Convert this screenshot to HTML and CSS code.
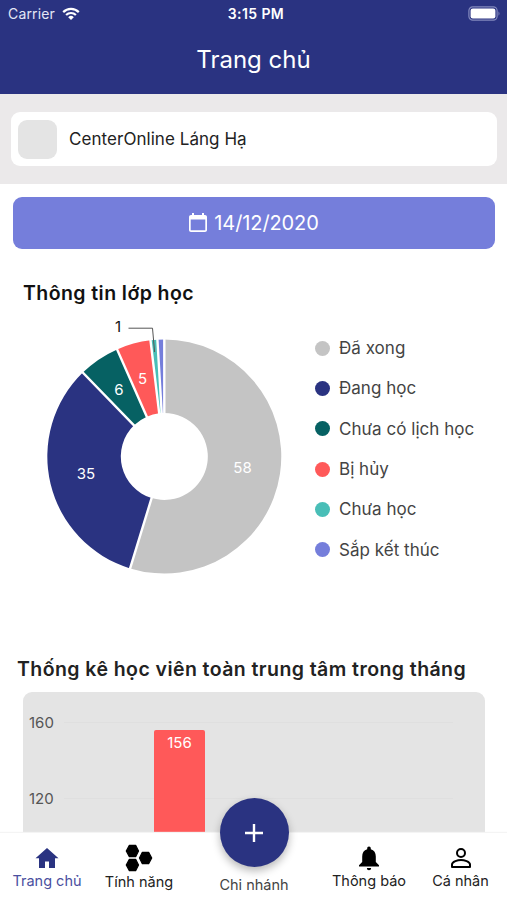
FILE: index.html
```html
<!DOCTYPE html>
<html lang="vi">
<head>
<meta charset="utf-8">
<title>Trang chủ</title>
<link rel="stylesheet" href="styles.css">
</head>
<body>
<div class="app">
  <header class="header">
    <div class="status">
      <div class="carrier"><span>Carrier</span>
        <svg width="18" height="14" viewBox="0 0 18 14" fill="none" stroke="#fff" stroke-width="2.2"><path d="M1.2 5.1a11 11 0 0 1 15.6 0M4.1 8a7 7 0 0 1 9.8 0"/><path d="M9 13 6.2 10.2a4 4 0 0 1 5.6 0Z" fill="#fff" stroke="none"/></svg>
      </div>
      <div class="clock">3:15 PM</div>
      <svg class="battery" width="33" height="15" viewBox="0 0 33 15"><rect x=".9" y=".9" width="28.2" height="13.2" rx="3.8" fill="none" stroke="#8389bd" stroke-width="1.2"/><rect x="2.6" y="2.6" width="24.8" height="9.8" rx="2.2" fill="#fff"/><path d="M30.5 5.2q2 2.3 0 4.6z" fill="#8389bd"/></svg>
    </div>
    <h1 class="page-title">Trang chủ</h1>
  </header>

  <section class="center-band">
    <div class="center-card"><div class="avatar"></div><span>CenterOnline Láng Hạ</span></div>
  </section>

  <main class="content">
    <button class="date-button">
      <svg width="18" height="20" viewBox="0 0 18 20"><path fill="#fff" fill-rule="evenodd" d="M16 2h-1V0h-2v2H5V0H3v2H2C.9 2 0 2.900 0 4v13c0 1.100.9 2 2 2h14c1.100 0 2-.9 2-2V4c0-1.100-.9-2-2-2Zm.3 15.300H1.700V6.500h14.600Z"/></svg>
      <span>14/12/2020</span>
    </button>

    <h2 class="class-title">Thông tin lớp học</h2>
    <div class="class-info">
      <svg class="donut" width="260" height="270" viewBox="30 312 260 270">
        <path fill="#c4c4c4" d="M164.300 339.500A117 117 0 1 1 130.100 568.400L151.600 498.100A43.500 43.500 0 1 0 164.300 413Z"/>
        <path fill="#2a3381" d="M130.100 568.400A117 117 0 0 1 82.800 372.600L134 425.300A43.500 43.500 0 0 0 151.600 498.100Z"/>
        <path fill="#066163" d="M82.800 372.600A117 117 0 0 1 117.100 349.400L146.800 416.700A43.500 43.500 0 0 0 134 425.300Z"/>
        <path fill="#ff5959" d="M117.100 349.400A117 117 0 0 1 150.500 340.300L159.200 413.300A43.500 43.500 0 0 0 146.800 416.700Z"/>
        <path fill="#49beb7" d="M150.500 340.300A117 117 0 0 1 157.400 339.700L161.700 413.100A43.500 43.500 0 0 0 159.200 413.300Z"/>
        <path fill="#757edb" d="M157.400 339.700A117 117 0 0 1 164.300 339.500L164.300 413A43.500 43.500 0 0 0 161.700 413.100Z"/>
        <path stroke="#fff" stroke-width="2.400" stroke-linecap="square" fill="none" d="M164.300 339.500V413M130.100 568.400L151.600 498.100M82.800 372.600L134 425.300M117.100 349.400L146.800 416.700M150.500 340.300L159.200 413.300M157.400 339.700L161.700 413.100"/>
        <path d="M128.500 328.200H152.500L154.600 352" fill="none" stroke="#555" stroke-width="1"/>
        <g class="slice-label">
          <text x="242.500" y="472.800">58</text><text x="86" y="479">35</text>
          <text x="119" y="394.500">6</text><text x="142.500" y="383.500">5</text>
          <text class="outer" x="118" y="332">1</text>
        </g>
      </svg>
      <ul class="legend">
        <li><i class="dot gray"></i>Đã xong</li>
        <li><i class="dot navy"></i>Đang học</li>
        <li><i class="dot green"></i>Chưa có lịch học</li>
        <li><i class="dot red"></i>Bị hủy</li>
        <li><i class="dot teal"></i>Chưa học</li>
        <li><i class="dot violet"></i>Sắp kết thúc</li>
      </ul>
    </div>

    <h2 class="student-title">Thống kê học viên toàn trung tâm trong tháng</h2>
    <div class="bar-chart">
      <div class="axis"><span>160</span><span>120</span></div>
      <div class="plot"><div class="bar">156</div></div>
    </div>
  </main>

  <nav class="tabs">
    <a class="tab home">
      <svg width="24" height="22" viewBox="0 0 24 22"><path fill="#2a3381" d="M12 1 .5 11.300H4V21h6v-6.500h4V21h6v-9.700h3.500Z"/></svg>
      <span>Trang chủ</span>
    </a>
    <a class="tab features">
      <svg width="28" height="28" viewBox="0 0 28 28"><path d="M4.400 1.300h6.200L13.500 7l-2.900 5.700H4.400L1.300 7ZM4.400 15.300h6.200l2.900 5.700-2.900 5.700H4.400L1.300 21ZM17.400 8.300h6.200l3.100 5.700-3.100 5.700h-6.200L14.500 14Z" stroke="#000" stroke-width="1.300" stroke-linejoin="round"/></svg>
      <span>Tính năng</span>
    </a>
    <a class="tab branch">
      <span class="fab"><svg width="18" height="18" viewBox="0 0 18 18"><path d="M9 0v18M0 9h18" stroke="#fff" stroke-width="2.400"/></svg></span>
      <span>Chi nhánh</span>
    </a>
    <a class="tab alerts">
      <svg width="22" height="25" viewBox="0 0 22 25"><path d="M11 .5c-1.200 0-1.800.8-1.800 2v.8C5.900 4.100 4.200 7 4.200 10.400V16L1 19.200v1.300h20v-1.300L17.800 16v-5.600c0-3.400-1.700-6.300-5-7.100v-.8c0-1.200-.6-2-1.800-2ZM8.900 22h4.200c0 1.300-.8 2.300-2.100 2.300S8.900 23.300 8.900 22Z"/></svg>
      <span>Thông báo</span>
    </a>
    <a class="tab profile">
      <svg width="22" height="22" viewBox="0 0 22 22" fill="none" stroke="#000" stroke-width="2"><circle cx="11" cy="6" r="4"/><path d="M2 20v-2.500c0-3 6-4.500 9-4.500s9 1.500 9 4.500V20Z" stroke-linejoin="round"/></svg>
      <span>Cá nhân</span>
    </a>
  </nav>
</div>
</body>
</html>
```
FILE: styles.css
```css
* { box-sizing: border-box; }
body { margin: 0; font-family: Inter, "Noto Sans", sans-serif; background: #fff; color: #222; }
h1, h2, ul { margin: 0; padding: 0; }
svg { display: block; flex: none; }
.app { width: 507px; height: 900px; display: flex; flex-direction: column; overflow: hidden; }
.header { height: 94px; flex: none; background: #2a3381; color: #fff; }
.status { height: 27px; display: grid; grid-template-columns: 1fr auto 1fr; align-items: center; padding: 0 6px 0 8px; }
.carrier { display: flex; align-items: center; gap: 7px; font-size: 14px; letter-spacing: .15px; color: #e4e6f5; }
.clock { font-size: 14px; font-weight: 600; letter-spacing: .4px; margin-left: 3px; }
.battery { justify-self: end; }
.page-title { text-align: center; font-size: 24px; font-weight: 400; line-height: 30px; padding-top: 18px; }
.center-band { height: 90px; flex: none; background: #ebe9ea; padding: 18px 10px 18px 11px; }
.center-card { height: 54px; background: #fff; border-radius: 9px; display: flex; align-items: center; padding-left: 7px; gap: 12px; font-size: 17px; letter-spacing: .05px; }
.avatar { width: 39px; height: 39px; border-radius: 9px; background: #e4e4e4; }
.content { flex: 1; min-height: 0; overflow: hidden; padding-top: 13px; }
.date-button { width: 482px; height: 52px; margin: 0 13px; padding: 0; border: 0; border-radius: 9px; background: #757edb; color: #fff; font: 400 20px Inter, sans-serif; letter-spacing: -.1px; display: flex; align-items: center; justify-content: center; gap: 7px; }
.class-title { font-size: 19.500px; font-weight: 600; line-height: 26px; letter-spacing: .43px; margin: 31px 0 0 23px; color: #111; }
.class-info { display: flex; height: 270px; margin-top: 6px; padding-left: 30px; }
.slice-label { font-size: 15px; text-anchor: middle; fill: #fff; }
.outer { fill: #111; }
.legend { list-style: none; margin: 16px 0 0 25px; font-size: 17px; letter-spacing: .03px; color: #444; }
.legend li { height: 40.300px; display: flex; align-items: center; gap: 9px; white-space: nowrap; }
.dot { width: 15px; height: 15px; border-radius: 50%; }
.gray { background: #c4c4c4; }
.navy { background: #2a3381; }
.green { background: #066163; }
.red { background: #ff5959; }
.teal { background: #49beb7; }
.violet { background: #757edb; }
.student-title { font-size: 19.500px; font-weight: 600; line-height: 26px; letter-spacing: .43px; margin: 74px 0 0 17px; white-space: nowrap; }
.bar-chart { width: 462px; height: 240px; margin: 10px 0 0 23px; border-radius: 9px; background: #e4e4e4; display: flex; padding: 21px 32px 0 6px; }
.axis { width: 35px; display: flex; flex-direction: column; gap: 56px; font-size: 15px; line-height: 20px; color: #555; }
.plot { flex: 1; margin-top: 9px; padding: 8px 0 0 90px; background: repeating-linear-gradient(#dfdfdf 0 1px, transparent 1px 76px); }
.bar { width: 51px; height: 190px; border-radius: 2px 2px 0 0; background: #ff5959; color: #fff; font-size: 15px; line-height: 25px; text-align: center; }
.tabs { height: 67px; flex: none; position: relative; background: #fff; display: grid; grid-template: 67px / 94px 90px 140px 90px 93px; box-shadow: 0 -1px 1px #f4f4f4; }
.tab { display: flex; flex-direction: column; align-items: center; justify-content: flex-end; font-size: 14.500px; line-height: 18px; white-space: nowrap; }
.home { color: #4b50a0; padding-bottom: 10px; gap: 3px; }
.features { padding-bottom: 9px; gap: 1px; }
.branch { padding-bottom: 6px; gap: 9px; color: #444; }
.alerts { padding-bottom: 10px; gap: 1px; }
.profile { padding-bottom: 10px; gap: 3px; }
.fab { width: 69px; height: 69px; flex: none; border-radius: 50%; background: #2a3381; display: flex; align-items: center; justify-content: center; box-shadow: 0 4px 9px rgba(0,0,0,.28); }
```
